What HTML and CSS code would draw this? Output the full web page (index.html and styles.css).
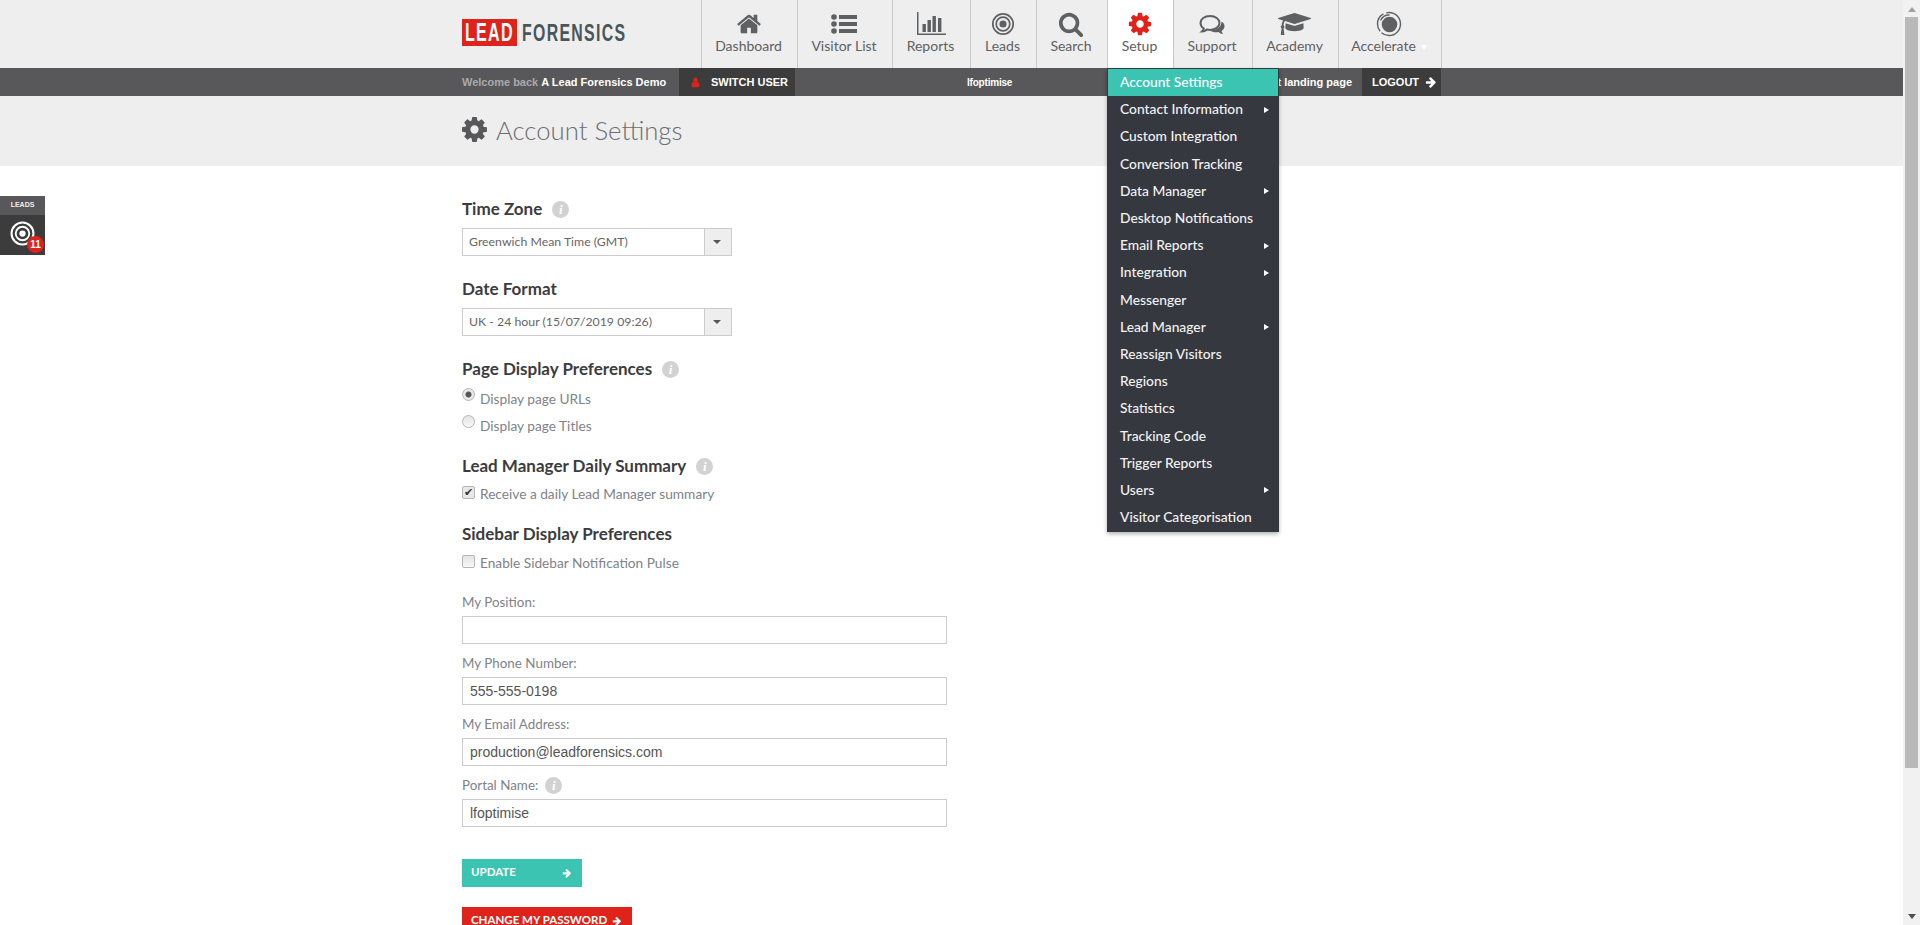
FILE: index.html
```html
<!DOCTYPE html>
<html lang="en">
<head>
    <meta charset="UTF-8">
    <title>Account Settings</title>
    <link rel="stylesheet" href="styles.css">
</head>
<body>
    <svg class="sprite" xmlns="http://www.w3.org/2000/svg">
        <symbol id="i-gear" viewBox="0 0 1792 1792"><path fill-rule="evenodd" d="M1152 896q0-106-75-181t-181-75-181 75-75 181 75 181 181 75 181-75 75-181zm512-109v222q0 12-8 23t-20 13l-185 28q-19 54-39 91 35 50 107 138 10 12 10 25t-9 23q-27 37-99 108t-94 71q-12 0-26-9l-138-108q-44 23-91 38-16 136-29 186-7 28-36 28h-222q-14 0-24.500-8.500t-11.500-21.500l-28-184q-49-16-90-37l-141 107q-10 9-25 9-14 0-25-11-126-114-165-168-7-10-7-23 0-12 8-23 15-21 51-66.500t54-70.500q-27-50-41-99l-183-27q-13-2-21-12.500t-8-23.500v-222q0-12 8-23t19-13l186-28q14-46 39-92-40-57-107-138-10-12-10-24 0-10 9-23 26-36 98.500-107.500t94.500-71.500q13 0 26 10l138 107q44-23 91-38 16-136 29-186 7-28 36-28h222q14 0 24.500 8.500t11.500 21.500l28 184q49 16 90 37l142-107q9-9 24-9 13 0 25 10 129 119 165 170 7 8 7 22 0 12-8 23-15 21-51 66.500t-54 70.500q26 50 41 98l183 28q13 2 21 12.500t8 23.500z"/></symbol>
        <symbol id="i-arrow" viewBox="0 0 1792 1792"><path d="M1600 960q0 54-37 91l-651 651q-39 37-91 37-51 0-90-37l-75-75q-38-38-38-91t38-91l293-293h-704q-52 0-84.500-37.500t-32.500-90.500v-128q0-53 32.500-90.500t84.500-37.500h704l-293-294q-38-36-38-90t38-90l75-75q38-38 90-38 53 0 91 38l651 651q37 35 37 90z"/></symbol>
    </svg>

    <div class="page">
        <header class="header">
            <div class="wrap header-row">
                <a class="logo" href="#">
                    <span class="logo-lead"><span class="logo-squeeze">LEAD</span></span>
                    <span class="logo-rest"><span class="logo-squeeze">FORENSICS</span></span>
                </a>
                <ul class="nav">
                    <li class="nav-item">
                        <svg class="nav-icon" viewBox="0 0 1792 1792"><path d="M1472 992v480q0 26-19 45t-45 19h-384v-384h-256v384h-384q-26 0-45-19t-19-45v-480q0-1 .5-3t.5-3l575-474 575 474q1 2 1 6zm223-69l-62 74q-8 9-21 11h-3q-13 0-21-7l-692-577-692 577q-12 8-24 7-13-2-21-11l-62-74q-8-10-7-23.500t11-21.500l719-599q32-26 76-26t76 26l244 204v-195q0-14 9-23t23-9h192q14 0 23 9t9 23v408l219 182q10 8 11 21.500t-7 23.500z"/></svg>
                        <span>Dashboard</span>
                    </li>
                    <li class="nav-item">
                        <svg class="nav-icon" viewBox="0 0 26 26"><circle cx="3" cy="6" r="2.800"/><circle cx="3" cy="13" r="2.800"/><circle cx="3" cy="20" r="2.800"/><rect x="8" y="4" width="18" height="4"/><rect x="8" y="11" width="18" height="4"/><rect x="8" y="18" width="18" height="4"/></svg>
                        <span>Visitor List</span>
                    </li>
                    <li class="nav-item">
                        <svg class="nav-icon nav-icon-reports" viewBox="0 0 30 26"><path d="M1 1h1.500v21.500H30V24H1z"/><rect x="6.500" y="13" width="3.400" height="8"/><rect x="11.500" y="9" width="3.400" height="12"/><rect x="16.500" y="5" width="3.400" height="16"/><rect x="22" y="7" width="3.400" height="14"/></svg>
                        <span>Reports</span>
                    </li>
                    <li class="nav-item">
                        <svg class="nav-icon" viewBox="0 0 26 26"><circle cx="13" cy="13" r="10.200" fill="none" stroke="#5f6062" stroke-width="1.700"/><circle cx="13" cy="13" r="6.800" fill="none" stroke="#5f6062" stroke-width="1.700"/><circle cx="13" cy="13" r="3.600"/></svg>
                        <span>Leads</span>
                    </li>
                    <li class="nav-item">
                        <svg class="nav-icon" viewBox="0 0 1792 1792"><path d="M1216 832q0-185-131.500-316.500t-316.500-131.500-316.500 131.500-131.500 316.500 131.500 316.500 316.500 131.500 316.500-131.500 131.500-316.500zm512 832q0 52-38 90t-90 38q-54 0-90-38l-343-342q-179 124-399 124-143 0-273.500-55.500t-225-150-150-225-55.500-273.500 55.500-273.500 150-225 225-150 273.500-55.500 273.500 55.500 225 150 150 225 55.500 273.500q0 220-124 399l343 343q37 37 37 90z"/></svg>
                        <span>Search</span>
                    </li>
                    <li class="nav-item active">
                        <svg class="nav-icon"><use href="#i-gear"/></svg>
                        <span>Setup</span>
                        <ul class="menu">
                            <li class="menu-item current">Account Settings</li>
                            <li class="menu-item has-sub">Contact Information</li>
                            <li class="menu-item">Custom Integration</li>
                            <li class="menu-item">Conversion Tracking</li>
                            <li class="menu-item has-sub">Data Manager</li>
                            <li class="menu-item">Desktop Notifications</li>
                            <li class="menu-item has-sub">Email Reports</li>
                            <li class="menu-item has-sub">Integration</li>
                            <li class="menu-item">Messenger</li>
                            <li class="menu-item has-sub">Lead Manager</li>
                            <li class="menu-item">Reassign Visitors</li>
                            <li class="menu-item">Regions</li>
                            <li class="menu-item">Statistics</li>
                            <li class="menu-item">Tracking Code</li>
                            <li class="menu-item">Trigger Reports</li>
                            <li class="menu-item has-sub">Users</li>
                            <li class="menu-item">Visitor Categorisation</li>
                        </ul>
                    </li>
                    <li class="nav-item">
                        <svg class="nav-icon" viewBox="0 0 26 26"><path d="M11 5C5.500 5 1.500 8 1.500 12c0 2.200 1.300 4.200 3.300 5.500-.3 1.300-1 2.300-1.800 3 2 0 3.700-.8 5-2 1 .3 2 .4 3 .4 5.500 0 9.500-3 9.500-6.900S16.500 5 11 5z" fill="none" stroke="#5f6062" stroke-width="2"/><path d="M22.500 10.500c2 1.200 3 2.800 3 4.700 0 2-1.200 3.700-3 4.800.3 1.300 1 2.300 1.800 3-2 0-3.600-.7-4.800-2-3 .8-6.500.2-8.500-1.800 5.500.5 11.500-2.500 11.500-8.700z"/></svg>
                        <span>Support</span>
                    </li>
                    <li class="nav-item">
                        <svg class="nav-icon nav-icon-wide" viewBox="0 0 2304 1792"><path d="M1774 836l18 316q4 69-82 128t-235 93.500-323 34.500-323-34.500-235-93.500-82-128l18-316 574 181q22 7 48 7t48-7zm530-324q0 23-22 31l-1120 352q-4 1-10 1t-10-1l-652-206q-43 34-71 111.500t-34 178.500q63 36 63 109 0 69-58 107l58 433q2 14-8 25-9 11-24 11h-192q-15 0-24-11-10-11-8-25l58-433q-58-38-58-107 0-73 65-111 11-207 98-330l-333-104q-22-8-22-31t22-31l1120-352q4-1 10-1t10 1l1120 352q22 8 22 31z"/></svg>
                        <span>Academy</span>
                    </li>
                    <li class="nav-item">
                        <svg class="nav-icon" viewBox="0 0 26 26"><circle cx="13.500" cy="13.500" r="7.800"/><circle cx="13" cy="13" r="11.500" fill="none" stroke="#5f6062" stroke-width="1.400" stroke-dasharray="26 2 20 3"/><path d="M4.500 9.500a9.500 9.500 0 0 1 9-5.500" fill="none" stroke="#5f6062" stroke-width="1.300"/></svg>
                        <span class="accelerate">Accelerate</span>
                    </li>
                </ul>
            </div>
        </header>

        <div class="topbar">
            <div class="wrap topbar-row">
                <span class="welcome">Welcome back <b>A Lead Forensics Demo</b></span>
                <a class="bar-btn switch" href="#">
                    <svg class="user-icon" viewBox="0 0 1792 1792"><path d="M1536 1399q0 109-62.500 187t-150.500 78h-854q-88 0-150.500-78t-62.500-187q0-85 8.500-160.500t31.500-152 58.500-131 94-89 134.500-34.500q131 128 313 128t313-128q76 0 134.500 34.500t94 89 58.500 131 31.500 152 8.500 160.500zm-256-887q0 159-112.500 271.500t-271.500 112.500-271.500-112.500-112.500-271.500 112.500-271.500 271.500-112.500 271.500 112.500 112.500 271.500z"/></svg>
                    SWITCH USER
                </a>
                <span class="portal">lfoptimise</span>
                <span class="landing">Set as default landing page</span>
                <a class="bar-btn logout" href="#">LOGOUT <svg class="arrow"><use href="#i-arrow"/></svg></a>
            </div>
        </div>

        <div class="title-band">
            <div class="wrap title-row">
                <svg class="title-icon"><use href="#i-gear"/></svg>
                <h1>Account Settings</h1>
            </div>
        </div>

        <form class="wrap settings">
            <h2>Time Zone <i class="info">i</i></h2>
            <div class="select"><span>Greenwich Mean Time (GMT)</span><b class="select-caret"></b></div>

            <h2>Date Format</h2>
            <div class="select"><span>UK - 24 hour (15/07/2019 09:26)</span><b class="select-caret"></b></div>

            <h2 class="before-radios">Page Display Preferences <i class="info">i</i></h2>
            <label class="choice"><input type="radio" name="display" checked>Display page URLs</label>
            <label class="choice"><input type="radio" name="display">Display page Titles</label>

            <h2 class="tight">Lead Manager Daily Summary <i class="info">i</i></h2>
            <label class="choice"><input type="checkbox" checked>Receive a daily Lead Manager summary</label>

            <h2 class="tight">Sidebar Display Preferences</h2>
            <label class="choice pulse"><input type="checkbox">Enable Sidebar Notification Pulse</label>

            <div class="fields">
                <label class="field-label" for="position">My Position:</label>
                <input class="field" id="position" type="text">
                <label class="field-label" for="phone">My Phone Number:</label>
                <input class="field" id="phone" type="text" value="555-555-0198">
                <label class="field-label" for="email">My Email Address:</label>
                <input class="field" id="email" type="text" value="production@leadforensics.com">
                <label class="field-label" for="portal">Portal Name: <i class="info">i</i></label>
                <input class="field" id="portal" type="text" value="lfoptimise">
            </div>

            <button class="btn btn-update" type="button">UPDATE <svg class="arrow"><use href="#i-arrow"/></svg></button>
            <button class="btn btn-password" type="button">CHANGE MY PASSWORD <svg class="arrow"><use href="#i-arrow"/></svg></button>
        </form>

        <aside class="leads-tab">
            <div class="leads-label">LEADS</div>
            <div class="leads-body">
                <svg class="leads-icon" viewBox="0 0 24 24"><circle cx="12" cy="12" r="10.500" fill="none" stroke="#fff" stroke-width="2"/><circle cx="12" cy="12" r="6.500" fill="none" stroke="#fff" stroke-width="1.800"/><circle cx="12" cy="12" r="3" fill="#fff"/></svg>
                <span class="leads-badge">11</span>
            </div>
        </aside>
    </div>

    <div class="scrollbar">
        <span class="scroll-up"></span>
        <span class="scroll-thumb"></span>
        <span class="scroll-down"></span>
    </div>
</body>
</html>
```

FILE: styles.css
```css
* {
    box-sizing: border-box;
}

body {
    font-family: Lato, "Open Sans", sans-serif;
    display: flex;
    height: 100vh;
    margin: 0;
    overflow: hidden;
    background-color: #fff;
}

a {
    color: inherit;
    text-decoration: none;
}

ul {
    list-style-type: none;
    padding: 0;
    margin: 0;
}

.sprite {
    display: none;
}

.page {
    flex: 1;
    height: 100%;
    overflow: hidden;
    position: relative;
}

.wrap {
    width: 979px;
    margin: 0 auto;
}

/* header */
.header {
    background-color: #eee;
    height: 68px;
}

.header-row {
    display: flex;
    height: 100%;
}

.logo {
    flex: none;
    width: 239px;
    display: flex;
    align-items: flex-start;
    padding-top: 19px;
    font-family: "Liberation Sans", Arial, sans-serif;
    font-weight: bold;
}

.logo-lead {
    background-color: #e0231a;
    color: #fff;
    width: 55px;
    height: 27px;
    line-height: 27px;
    font-size: 26px;
    display: flex;
    justify-content: center;
}

.logo-rest {
    color: #47565b;
    width: 104px;
    font-size: 24px;
    line-height: 27px;
    margin-left: 5px;
    display: flex;
}

.logo-squeeze {
    flex: none;
    white-space: nowrap;
    letter-spacing: 2px;
    transform: scaleX(0.62);
}

.logo-rest .logo-squeeze {
    transform: scaleX(0.66);
    transform-origin: left center;
}

.nav {
    flex: none;
    display: grid;
    grid-template-columns: 96px 95px 78px 66px 71px 66px 79px 86px 103px;
    border-left: 1px solid #c9c9c9;
}

.nav-item {
    border-right: 1px solid #c9c9c9;
    color: #5f6062;
    font-size: 14px;
    display: flex;
    flex-direction: column;
    align-items: center;
    padding: 11px 2px 0 0;
    position: relative;
}

.nav-icon {
    width: 26px;
    height: 26px;
    fill: #5f6062;
}

.nav-icon-wide {
    width: 33px;
}

.nav-icon-reports {
    width: 30px;
}

.nav-item span {
    line-height: 17px;
}

.nav-item.active {
    background-color: #fff;
}

.nav-item.active .nav-icon {
    fill: #e0231a;
}

.accelerate::after {
    content: "";
    display: inline-block;
    margin-left: 5px;
    border-left: 3px solid transparent;
    border-right: 3px solid transparent;
    border-top: 5px solid #fff;
    vertical-align: 1px;
}

/* setup dropdown */
.menu {
    position: absolute;
    top: 100%;
    left: -1px;
    width: 172px;
    background-color: #36383f;
    border: 1px solid #36383f;
    border-bottom: 0;
    padding-bottom: 1px;
    box-shadow: 0 2px 4px rgba(0, 0, 0, 0.3);
    z-index: 10;
}

.menu-item {
    height: 27.2px;
    padding: 0 9px 2px 12px;
    color: #f2f2f2;
    font-size: 13.8px;
    font-weight: 500;
    display: flex;
    align-items: center;
    justify-content: space-between;
}

.menu-item.current {
    background-color: #3cc4b2;
    color: #fff;
}

.has-sub::after {
    content: "";
    border-top: 3px solid transparent;
    border-bottom: 3px solid transparent;
    border-left: 5px solid #fff;
    margin-top: 2px;
}

/* dark bar */
.topbar {
    background-color: #58585a;
    height: 28px;
    color: #fff;
    font-family: "Liberation Sans", Arial, sans-serif;
    font-size: 11px;
    font-weight: bold;
}

.topbar-row {
    display: flex;
    align-items: center;
    height: 100%;
}

.welcome {
    width: 217px;
    color: #aaa;
}

.welcome b {
    color: #fff;
}

.bar-btn {
    background-color: #3c3c3c;
    height: 100%;
    display: flex;
    align-items: center;
}

.switch {
    width: 116px;
    padding-left: 11px;
    gap: 10px;
}

.user-icon {
    width: 11px;
    height: 11px;
    fill: #e0231a;
}

.portal {
    margin-left: 172px;
    font-size: 10px;
    letter-spacing: -0.2px;
}

.landing {
    margin-left: auto;
    margin-right: 10px;
}

.logout {
    width: 79px;
    padding-left: 10px;
    gap: 6px;
}

.arrow {
    width: 12px;
    height: 12px;
    fill: #fff;
}

/* title */
.title-band {
    background-color: #eee;
    height: 70px;
}

.title-row {
    display: flex;
    align-items: center;
    height: 100%;
    gap: 7px;
}

.title-icon {
    width: 29px;
    height: 29px;
    margin: 0 0 4px -2px;
    fill: #58585a;
}

h1 {
    font-size: 25.7px;
    font-weight: 300;
    color: #6b6d70;
    margin: 0 0 3px;
}

/* form */
.settings {
    padding-top: 33px;
}

h2 {
    font-size: 17px;
    font-weight: bold;
    line-height: 20px;
    color: #3c3c3e;
    margin: 23px 0 9px;
    display: flex;
    align-items: center;
    gap: 10px;
}

h2:first-child {
    margin-top: 0;
}

h2.before-radios {
    margin-bottom: 7px;
}

h2.tight {
    margin: 16px 0 5px;
}

.info {
    width: 17px;
    height: 17px;
    border-radius: 50%;
    background-color: #d2d2d2;
    color: #fff;
    font-family: "Liberation Serif", serif;
    font-size: 13px;
    font-weight: bold;
    line-height: 17px;
    text-align: center;
    display: inline-block;
}

.select {
    width: 270px;
    height: 28px;
    border: 1px solid #ccc;
    background-color: #fff;
    display: flex;
    align-items: center;
    justify-content: space-between;
    padding-left: 6px;
    color: #666;
    font-size: 12.3px;
}

.select span {
    padding-bottom: 1px;
}

.select-caret {
    width: 27px;
    height: 100%;
    background-color: #eee;
    border-left: 1px solid #ccc;
    position: relative;
}

.select-caret::after {
    content: "";
    position: absolute;
    left: 8px;
    top: 11px;
    border-left: 4px solid transparent;
    border-right: 4px solid transparent;
    border-top: 4px solid #555;
}

.choice {
    display: flex;
    align-items: flex-start;
    height: 27px;
    line-height: 25px;
    color: #80838a;
    font-size: 13.7px;
}

.choice input {
    appearance: none;
    width: 13px;
    height: 13px;
    margin: 2px 5px 0 0;
    border: 1px solid #b5b5b5;
    background: linear-gradient(#e4e4e4, #f8f8f8);
    flex: none;
}

.choice input[type="radio"] {
    border-radius: 50%;
}

.choice input[type="radio"]:checked {
    background: radial-gradient(circle, #555 0, #555 2.500px, #e8e8e8 3.500px);
}

.choice input[type="checkbox"] {
    border-radius: 2px;
    margin-top: 5px;
}

.choice input[type="checkbox"]:checked {
    background: #e8e8e8;
    position: relative;
}

.choice input[type="checkbox"]:checked::after {
    content: "\2714";
    position: absolute;
    left: 1px;
    top: -3px;
    font-size: 11px;
    line-height: 16px;
    color: #333;
}

.pulse {
    margin-top: 6px;
}

.fields {
    margin-top: 16px;
    display: flex;
    flex-direction: column;
    width: 485px;
}

.field-label {
    display: flex;
    align-items: center;
    gap: 7px;
    height: 20px;
    margin-bottom: 3px;
    padding-bottom: 2px;
    color: #80838a;
    font-size: 13.4px;
}

.field {
    height: 28px;
    margin-bottom: 10px;
    border: 1px solid #ccc;
    padding: 0 7px;
    color: #555;
    font-family: "Liberation Sans", Arial, sans-serif;
    font-size: 14px;
    outline: none;
}

.btn {
    display: flex;
    align-items: center;
    justify-content: space-between;
    height: 28px;
    border: none;
    padding: 0 10px 3px 9px;
    color: #fff;
    font-family: inherit;
    font-size: 11.5px;
    font-weight: bold;
    white-space: nowrap;
}

.btn .arrow {
    width: 10px;
    height: 10px;
    margin-top: 3px;
}

.btn-update {
    width: 120px;
    margin-top: 22px;
    background-color: #3cc4b2;
}

.btn-password {
    width: 170px;
    margin-top: 20px;
    background-color: #e0231a;
}

/* leads side tab */
.leads-tab {
    position: absolute;
    left: 0;
    top: 196px;
    width: 45px;
}

.leads-label {
    height: 19px;
    background-color: #58585a;
    color: #eee;
    font-family: "Liberation Sans", Arial, sans-serif;
    font-size: 7px;
    font-weight: bold;
    line-height: 18px;
    text-align: center;
}

.leads-body {
    height: 40px;
    background-color: #3c3c3c;
    position: relative;
}

.leads-icon {
    position: absolute;
    left: 10px;
    top: 6px;
    width: 25px;
    height: 25px;
}

.leads-badge {
    position: absolute;
    right: 1px;
    bottom: 2px;
    width: 17px;
    height: 17px;
    border-radius: 50%;
    background-color: #e0231a;
    color: #fff;
    font-family: "Liberation Sans", Arial, sans-serif;
    font-size: 10px;
    font-weight: bold;
    line-height: 17px;
    text-align: center;
}

/* page scrollbar */
.scrollbar {
    width: 17px;
    height: 100%;
    background-color: #f1f1f1;
    display: flex;
    flex-direction: column;
    align-items: center;
}

.scroll-up {
    margin: 7px 0 5px;
    border-left: 4px solid transparent;
    border-right: 4px solid transparent;
    border-bottom: 5px solid #a3a3a3;
}

.scroll-thumb {
    width: 13px;
    height: 751px;
    background-color: #b9b9b9;
}

.scroll-down {
    margin-top: auto;
    margin-bottom: 6px;
    border-left: 4px solid transparent;
    border-right: 4px solid transparent;
    border-top: 5px solid #505050;
}
```
